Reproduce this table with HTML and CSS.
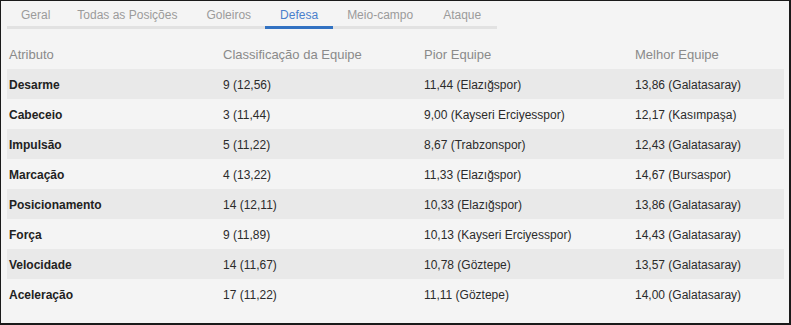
FILE: index.html
```html
<!DOCTYPE html>
<html lang="pt">
<head>
<meta charset="utf-8">
<link rel="stylesheet" href="styles.css">
</head>
<body>
<div class="frame">
  <nav class="tabs">
    <span class="tab">Geral</span>
    <span class="tab">Todas as Posições</span>
    <span class="tab">Goleiros</span>
    <span class="tab active">Defesa</span>
    <span class="tab">Meio-campo</span>
    <span class="tab">Ataque</span>
  </nav>
  <table class="stats">
    <colgroup>
      <col class="c1"><col class="c2"><col class="c3"><col class="c4">
    </colgroup>
    <thead>
      <tr><th>Atributo</th><th>Classificação da Equipe</th><th>Pior Equipe</th><th>Melhor Equipe</th></tr>
    </thead>
    <tbody>
      <tr><td class="attr">Desarme</td><td>9 (12,56)</td><td>11,44 (Elazığspor)</td><td>13,86 (Galatasaray)</td></tr>
      <tr><td class="attr">Cabeceio</td><td>3 (11,44)</td><td>9,00 (Kayseri Erciyesspor)</td><td>12,17 (Kasımpaşa)</td></tr>
      <tr><td class="attr">Impulsão</td><td>5 (11,22)</td><td>8,67 (Trabzonspor)</td><td>12,43 (Galatasaray)</td></tr>
      <tr><td class="attr">Marcação</td><td>4 (13,22)</td><td>11,33 (Elazığspor)</td><td>14,67 (Bursaspor)</td></tr>
      <tr><td class="attr">Posicionamento</td><td>14 (12,11)</td><td>10,33 (Elazığspor)</td><td>13,86 (Galatasaray)</td></tr>
      <tr><td class="attr">Força</td><td>9 (11,89)</td><td>10,13 (Kayseri Erciyesspor)</td><td>14,43 (Galatasaray)</td></tr>
      <tr><td class="attr">Velocidade</td><td>14 (11,67)</td><td>10,78 (Göztepe)</td><td>13,57 (Galatasaray)</td></tr>
      <tr><td class="attr">Aceleração</td><td>17 (11,22)</td><td>11,11 (Göztepe)</td><td>14,00 (Galatasaray)</td></tr>
    </tbody>
  </table>
</div>
</body>
</html>
```
FILE: styles.css
```css
html, body {
  margin: 0;
  padding: 0;
  background: #f4f4f4;
}
.frame {
  box-sizing: border-box;
  width: 791px;
  height: 325px;
  border: 1px solid #1a1a1a;
  border-right-width: 2px;
  border-bottom-width: 2px;
  background: #f4f4f4;
  padding: 0 5px 0 6px;
  font-family: "Liberation Sans", Arial, sans-serif;
  overflow: hidden;
}
.tabs {
  display: flex;
  width: 490px;
  border-bottom: 3px solid #e2e2e2;
}
.tab {
  font-size: 12px;
  line-height: 15px;
  padding: 7px 14px 3px;
  color: #9b9b9b;
  margin-bottom: -3px;
  border-bottom: 3px solid transparent;
}
.tab:first-child {
  padding-right: 13px;
}
.tab:nth-child(2) {
  padding-right: 15px;
}
.tab.active {
  color: #4a7fcc;
  border-bottom-color: #3272c2;
  padding: 7px 15px 3px;
}
.tab:nth-child(5) {
  padding-right: 16px;
}
.stats {
  margin-top: 10px;
  width: 777px;
  border-collapse: collapse;
  table-layout: fixed;
  font-size: 12px;
}
.c1 { width: 214px; }
.c2 { width: 201px; }
.c3 { width: 211px; }
.c4 { width: 151px; }
.stats th, .stats td {
  box-sizing: border-box;
  height: 30px;
  padding: 0 0 0 2px;
  text-align: left;
  vertical-align: middle;
  white-space: nowrap;
}
.stats td {
  padding-top: 2px;
  color: #2b2b2b;
}
.stats th {
  font-size: 13px;
  font-weight: normal;
  color: #8a8a8a;
}
.stats td.attr {
  font-weight: bold;
  color: #222222;
}
.stats tbody tr:nth-child(odd) {
  background: #e9e9e9;
}
```
